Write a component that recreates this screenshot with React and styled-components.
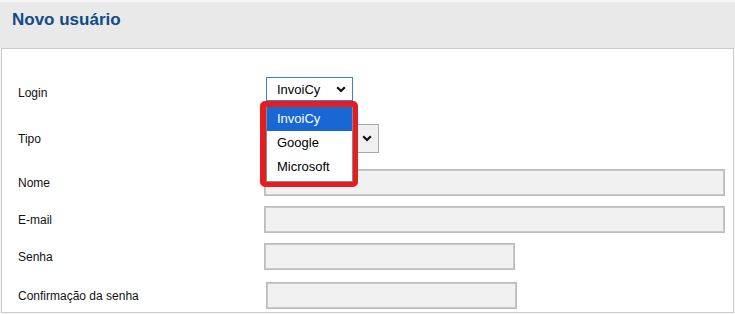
import React from "react";
import styled, { createGlobalStyle } from "styled-components";

const GlobalStyle = createGlobalStyle`
  html, body {
    margin: 0;
    padding: 0;
    background: #fff;
    font-family: "Liberation Sans", Arial, sans-serif;
  }
`;

const Page = styled.div`
  width: 735px;
  height: 314px;
  padding-top: 2px;
  box-sizing: border-box;
  background: #f6f6f6;
  overflow: hidden;
`;

const Header = styled.div`
  height: 46px;
  box-sizing: border-box;
  padding: 8px 0 0 12px;
  background: #e9e9e9;
`;

const Title = styled.h2`
  margin: 0;
  font-size: 17px;
  line-height: 19px;
  font-weight: 700;
  color: #0f4b85;
`;

const Panel = styled.div`
  margin: 0 1px;
  height: 265px;
  box-sizing: border-box;
  border: 1px solid #cbcbcb;
  background: #fff;
  padding: 28px 0 0 16px;
`;

const Row = styled.div`
  display: grid;
  grid-template-columns: 246px 1fr;
  align-items: center;
  height: ${({ $h }) => $h}px;
  margin-top: ${({ $gap }) => $gap || 0}px;
`;

const Label = styled.label`
  font-size: 12px;
  color: #111;
  padding-top: ${({ $shift }) => $shift || 0}px;
`;

const Field = styled.div`
  position: relative;
  display: flex;
  align-items: center;
  padding-left: ${({ $indent }) => $indent || 0}px;
`;

const SelectBox = styled.div`
  display: flex;
  align-items: center;
  justify-content: space-between;
  box-sizing: border-box;
  width: ${({ $w }) => $w}px;
  height: ${({ $h }) => $h}px;
  padding: 0 6px 0 10px;
  border: 1px solid ${({ $focus }) => ($focus ? "#3d7fd3" : "#a9a9a9")};
  background: ${({ $focus }) => ($focus ? "#fff" : "#f0f0f0")};
  font-size: 13px;
  color: #000;
`;

const TextInput = styled.input`
  box-sizing: border-box;
  width: ${({ $w }) => $w}px;
  height: 27px;
  margin: 0;
  border: 1px solid #bcbcbc;
  box-shadow: inset 0 0 0 1px #c8c8c8;
  background: #f1f1f1;
  outline: none;
`;

const DropFrame = styled.div`
  position: absolute;
  left: -4px;
  top: 24px;
  z-index: 5;
  border: 6px solid #e41e20;
  border-right-width: 5px;
  border-bottom-width: 5px;
  border-radius: 5px;
  background: #e41e20;
`;

const OptionList = styled.ul`
  list-style: none;
  margin: 0;
  padding: 0 0 2px;
  width: 87px;
  box-sizing: border-box;
  border: 1px solid #8a8a8a;
  border-top: none;
  background: #fff;
`;

const Option = styled.li`
  height: 24px;
  line-height: 24px;
  padding-left: 10px;
  font-size: 13px;
  color: ${({ $active }) => ($active ? "#fff" : "#000")};
  background: ${({ $active }) => ($active ? "#1967d2" : "#fff")};
`;

const Chevron = () => (
  <svg width="10" height="7" viewBox="0 0 10 7">
    <polyline points="1.2,1.2 5,5 8.8,1.2" fill="none" stroke="#111" strokeWidth="2.2" />
  </svg>
);

const options = ["InvoiCy", "Google", "Microsoft"];

export default function App() {
  return (
    <Page>
      <GlobalStyle />
      <Header>
        <Title>Novo usuário</Title>
      </Header>
      <Panel>
        <Row $h={24}>
          <Label $shift={7}>Login</Label>
          <Field $indent={2}>
            <SelectBox $w={87} $h={24} $focus>
              InvoiCy
              <Chevron />
            </SelectBox>
            <DropFrame>
              <OptionList>
                {options.map((o, i) => (
                  <Option key={o} $active={i === 0}>
                    {o}
                  </Option>
                ))}
              </OptionList>
            </DropFrame>
          </Field>
        </Row>
        <Row $h={29} $gap={23}>
          <Label>Tipo</Label>
          <Field $indent={2}>
            <SelectBox $w={113} $h={29}>
              <span />
              <Chevron />
            </SelectBox>
          </Field>
        </Row>
        <Row $h={27} $gap={16}>
          <Label>Nome</Label>
          <Field>
            <TextInput $w={461} />
          </Field>
        </Row>
        <Row $h={27} $gap={10}>
          <Label>E-mail</Label>
          <Field>
            <TextInput $w={461} />
          </Field>
        </Row>
        <Row $h={27} $gap={10}>
          <Label>Senha</Label>
          <Field>
            <TextInput $w={251} type="password" />
          </Field>
        </Row>
        <Row $h={27} $gap={12}>
          <Label>Confirmação da senha</Label>
          <Field $indent={2}>
            <TextInput $w={251} type="password" />
          </Field>
        </Row>
      </Panel>
    </Page>
  );
}
